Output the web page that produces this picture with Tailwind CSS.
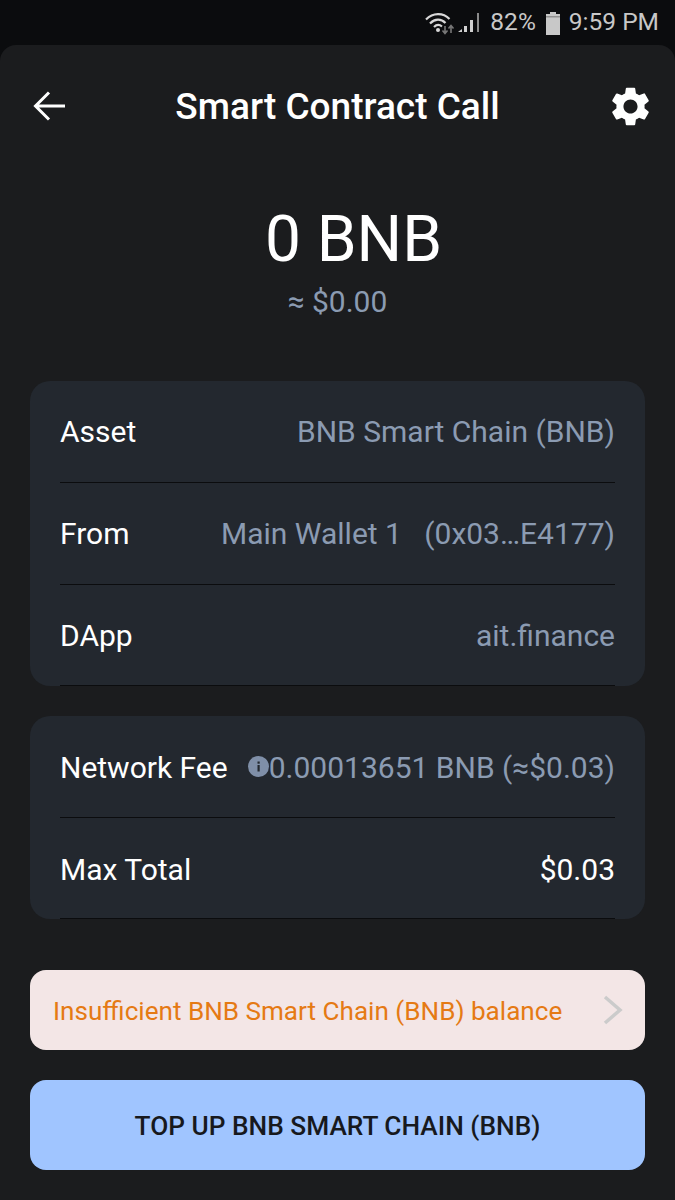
<!DOCTYPE html>
<html>
    <head>
        <meta charset="utf-8" />
        <title>Smart Contract Call</title>
        <meta name="viewport" content="width=device-width, initial-scale=1.0">
        <script src="https://cdn.jsdelivr.net/npm/@tailwindcss/browser@4"></script>
    </head>
    <body class="bg-[#0b0c0e] font-['Roboto',sans-serif]">
        <div class="w-[675px] h-[1200px] overflow-hidden flex flex-col">
            <!-- status bar -->
            <div class="h-[45px] shrink-0 flex items-center justify-end pr-[16px] text-[#c8c8c8] text-[24.5px]">
                <svg class="w-[32px] h-[24px]" viewBox="0 0 32 24" fill="none">
                    <path d="M1 8.500C8 1.500 18 1.500 24.500 8" stroke="#d8d8d8" stroke-width="2.200"/>
                    <path d="M5 12.500C10 7.500 16 7.500 20.500 12" stroke="#d8d8d8" stroke-width="2.200"/>
                    <path d="M9 16C11.500 13.500 14.500 13.500 17 15.500" stroke="#d8d8d8" stroke-width="2.200"/>
                    <circle cx="13" cy="19" r="2" fill="#d8d8d8"/>
                    <path d="M20 15v7M17.500 19.500l2.500 3 2.500-3" stroke="#777" stroke-width="1.600"/>
                    <path d="M26 22v-7M23.500 17.500l2.500-3 2.500 3" stroke="#777" stroke-width="1.600"/>
                </svg>
                <svg class="w-[24px] h-[26px] mr-[9px]" viewBox="0 0 24 26" fill="#d0d0d0">
                    <path d="M1 22l4-3v3z"/>
                    <rect x="7" y="16" width="3" height="6"/>
                    <rect x="13" y="10" width="3" height="12"/>
                    <rect x="20" y="3" width="2" height="19" fill="#8a8a8a"/>
                </svg>
                <span>82%</span>
                <svg class="w-[16px] h-[24px] ml-[9px] mr-[8px]" viewBox="0 0 16 24" fill="#c8c8c8">
                    <path d="M5 1h6v2h4v21H1V3h4z"/>
                    <rect x="1" y="5" width="14" height="1.500" fill="#8f8f8f"/>
                </svg>
                <span>9:59 PM</span>
            </div>

            <!-- sheet -->
            <div class="flex-1 bg-[#1b1c1e] rounded-t-[16px] flex flex-col">
                <div class="h-[122px] shrink-0 flex items-center justify-between pl-[33px] pr-[21px]">
                    <svg class="w-[32px] h-[30px]" viewBox="0 0 32 30" fill="none" stroke="#fff" stroke-width="3">
                        <path d="M32 15H3M16 1.500L2.500 15L16 28.500"/>
                    </svg>
                    <h1 class="text-white text-[37px] leading-none font-medium ml-[3px]">Smart Contract Call</h1>
                    <svg class="w-[47px] h-[47px]" viewBox="0 0 24 24" fill="#fff">
                        <path d="M19.140 12.940c.04-.3.060-.61.060-.94 0-.32-.020-.64-.070-.94l2.030-1.580a.49.490 0 0 0 .120-.610l-1.920-3.320a.488.488 0 0 0-.590-.220l-2.390.960c-.500-.380-1.030-.700-1.620-.940l-.360-2.540a.484.484 0 0 0-.480-.410h-3.840c-.240 0-.430.170-.470.410l-.360 2.540c-.590.240-1.130.570-1.620.940l-2.390-.960c-.220-.080-.470 0-.590.220L2.740 8.870c-.120.210-.080.470.120.610l2.030 1.580c-.050.300-.090.630-.090.940s.020.640.070.940l-2.030 1.580a.490.490 0 0 0-.120.610l1.920 3.320c.120.220.370.290.590.220l2.390-.960c.500.380 1.030.700 1.620.940l.360 2.540c.050.240.240.410.480.410h3.840c.240 0 .440-.170.470-.410l.360-2.540c.590-.240 1.130-.560 1.620-.940l2.390.960c.220.080.470 0 .590-.220l1.920-3.320c.120-.220.070-.470-.120-.610l-2.010-1.580zM12 15.600c-1.980 0-3.600-1.620-3.600-3.600s1.620-3.600 3.600-3.600 3.600 1.620 3.600 3.600-1.620 3.600-3.600 3.600z"/>
                    </svg>
                </div>

                <div class="flex flex-col items-center">
                    <div class="text-white text-[64px] leading-[70px] mt-[38px] ml-[32px]">0 BNB</div>
                    <div class="text-[#8b9bb2] text-[30px] leading-[34px] mt-[10px]">≈ $0.00</div>
                </div>

                <div class="mx-[30px] mt-[62px] flex flex-col gap-[30px]">
                    <div class="bg-[#23282f] rounded-[20px] px-[30px] text-[30px]">
                        <div class="h-[102px] flex items-center justify-between border-b border-[#0b0c0e]">
                            <span class="text-white">Asset</span>
                            <span class="text-[#8b9bb2]">BNB Smart Chain (BNB)</span>
                        </div>
                        <div class="h-[102px] flex items-center justify-between border-b border-[#0b0c0e]">
                            <span class="text-white">From</span>
                            <span class="text-[#8b9bb2] whitespace-pre">Main Wallet 1   (0x03…E4177)</span>
                        </div>
                        <div class="h-[101px] pt-[1px] flex items-center justify-between border-b border-[#0b0c0e]">
                            <span class="text-white">DApp</span>
                            <span class="text-[#8b9bb2]">ait.finance</span>
                        </div>
                    </div>

                    <div class="bg-[#23282f] rounded-[20px] px-[30px] text-[30px]">
                        <div class="h-[102px] pt-[2px] flex items-center justify-between border-b border-[#0b0c0e]">
                            <span class="text-white">Network Fee</span>
                            <span class="flex items-center text-[#8b9bb2]">
                                <svg class="w-[21px] h-[21px] mb-[3px]" viewBox="0 0 21 21">
                                    <circle cx="10.500" cy="10.500" r="10.500" fill="#7f8fa8"/>
                                    <rect x="9.500" y="9" width="2.200" height="6.500" fill="#23282f"/>
                                    <rect x="9.500" y="5.500" width="2.200" height="2.200" fill="#23282f"/>
                                </svg>
                                <span>0.00013651 BNB (≈$0.03)</span>
                            </span>
                        </div>
                        <div class="h-[101px] pt-[2px] flex items-center justify-between border-b border-[#0b0c0e]">
                            <span class="text-white">Max Total</span>
                            <span class="text-white">$0.03</span>
                        </div>
                    </div>
                </div>

                <div class="mx-[30px] mt-[51px] h-[80px] pt-[3px] bg-[#f3e6e6] rounded-[16px] flex items-center justify-between pl-[23px] pr-[22px]">
                    <span class="text-[#e57a14] text-[26.1px]">Insufficient BNB Smart Chain (BNB) balance</span>
                    <svg class="w-[20px] h-[30px] -mt-[3px]" viewBox="0 0 20 30" fill="none" stroke="#cbcbcb" stroke-width="3.500">
                        <path d="M2 2l15 13L2 28"/>
                    </svg>
                </div>

                <button class="mx-[30px] mt-[30px] h-[90px] pt-[3px] bg-[#a0c5ff] rounded-[16px] flex items-center justify-center text-[#17191d] text-[26.25px] font-medium">TOP UP BNB SMART CHAIN (BNB)</button>
            </div>
        </div>
    </body>
</html>
